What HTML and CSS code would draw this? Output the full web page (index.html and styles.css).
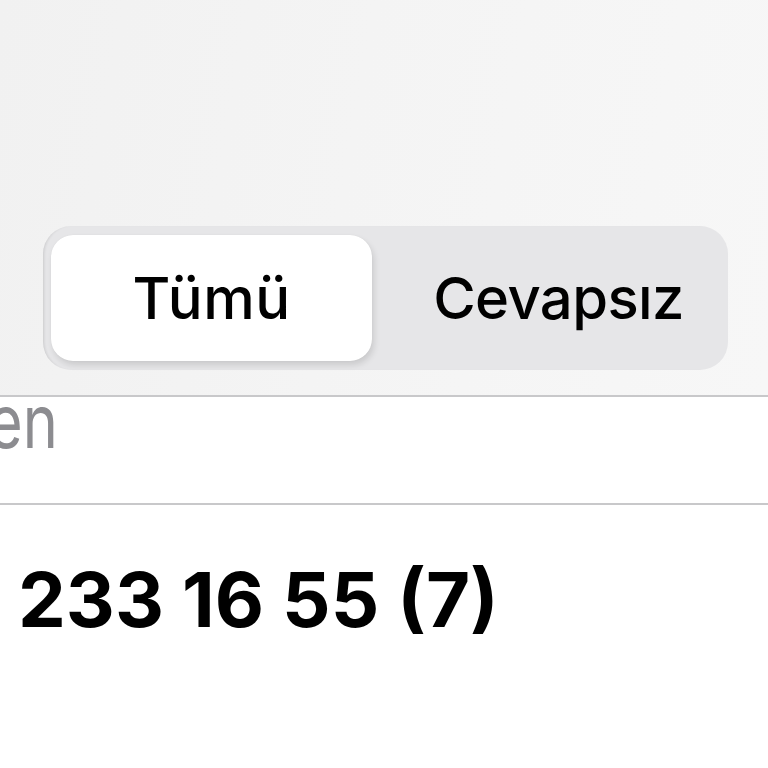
FILE: index.html
```html
<!DOCTYPE html>
<html>
<head>
<meta charset="utf-8">
<link rel="stylesheet" href="styles.css">
</head>
<body>
<div class="top">
  <div class="segmented">
    <div class="seg seg-active">Tümü</div>
    <div class="seg seg-second">Cevapsız</div>
  </div>
</div>
<div class="row row-search"><span class="faded">en</span></div>
<div class="row row-number"><span class="number">233 16 55 (7)</span></div>
</body>
</html>
```
FILE: styles.css
```css
html, body {
  margin: 0;
  padding: 0;
  background: #ffffff;
  font-family: Inter, "Liberation Sans", Arial, sans-serif;
}
.top {
  height: 397px;
  box-sizing: border-box;
  padding: 226px 40px 0 43px;
  background: linear-gradient(100deg, #f1f1f1 0%, #f4f4f4 45%, #f7f7f7 100%);
  border-bottom: 2px solid #c8c8ca;
}
.segmented {
  width: 685px;
  height: 144px;
  box-sizing: border-box;
  padding: 9px 8px;
  border-radius: 28px;
  background: #e6e6e8;
  display: flex;
  box-shadow: inset 3px 0 3px -2px rgba(0,0,0,0.12);
}
.seg {
  flex: 0 0 321px;
  display: flex;
  align-items: center;
  justify-content: center;
  font-size: 58px;
  font-weight: 500;
  color: #000;
  letter-spacing: 0.5px;
}
.seg-second {
  flex: 1 1 auto;
  padding-left: 25px;
  letter-spacing: -0.6px;
}
.seg-active {
  background: #ffffff;
  border-radius: 22px;
  box-shadow: 2px 4px 6px rgba(0,0,0,0.12), 0 0 1px rgba(0,0,0,0.08);
}
.row {
  background: #fff;
  overflow: hidden;
  box-sizing: border-box;
}
.row-search {
  height: 108px;
  border-bottom: 2px solid #c8c8ca;
}
.faded {
  display: inline-block;
  font-size: 70px;
  line-height: 70px;
  margin-top: -13px;
  margin-left: -12px;
  color: #8c8c90;
  transform: scale(0.85, 1.06);
  transform-origin: left top;
}
.row-number {
  height: 263px;
  padding-left: 18px;
  padding-top: 44px;
}
.number {
  display: block;
  font-size: 76px;
  line-height: 100px;
  font-weight: 700;
  color: #000;
}
```
